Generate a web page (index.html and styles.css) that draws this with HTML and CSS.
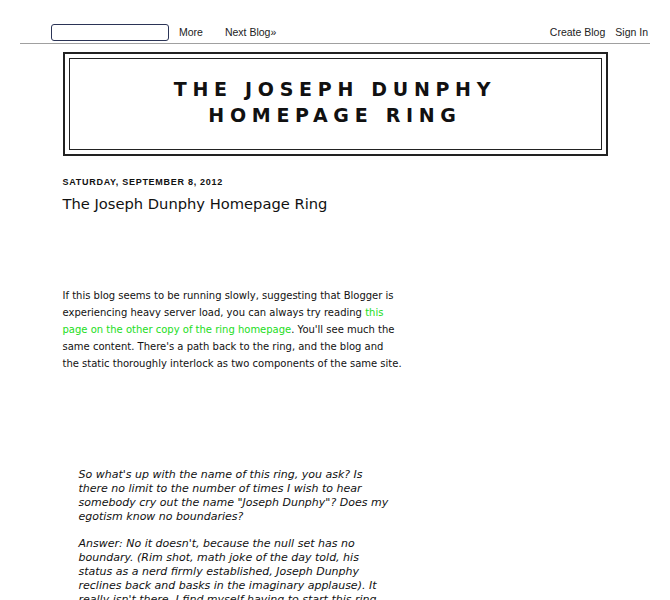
FILE: index.html
```html
<!DOCTYPE html>
<html lang="en">
<head>
    <meta charset="UTF-8">
    <meta name="viewport" content="width=device-width, initial-scale=1.0">
    <title>The Joseph Dunphy Homepage Ring</title>
    <link rel="stylesheet" href="styles.css">
</head>
<body>
    <div class="navbar">
        <div class="nav-left">
            <input type="text" class="search-box">
            <a href="#">More</a>
            <a href="#">Next Blog&raquo;</a>
        </div>
        <div class="nav-right">
            <a href="#">Create Blog</a>
            <a href="#">Sign In</a>
        </div>
    </div>

    <div class="outer-wrapper">
        <div class="header-wrapper">
            <div class="header">
                <h1>The Joseph Dunphy Homepage Ring</h1>
            </div>
        </div>

        <div class="main">
            <h2 class="date-header">Saturday, September 8, 2012</h2>
            <h3 class="post-title">The Joseph Dunphy Homepage Ring</h3>

            <div class="post-body">
                <p class="intro">If this blog seems to be running slowly, suggesting that Blogger is experiencing heavy server load, you can always try reading <a href="#">this page on the other copy of the ring homepage</a>. You'll see much the same content. There's a path back to the ring, and the blog and the&nbsp;static thoroughly interlock as two components of the same site.</p>

                <blockquote>
                    <p>So what's up with the name of this ring, you ask? Is there no limit to the number of times I wish to hear somebody cry out the name "Joseph Dunphy"? Does my egotism know no boundaries?</p>
                    <p>Answer: No it doesn't, because the null set has no boundary. (Rim shot, math joke of the day told, his status as a nerd firmly established, Joseph Dunphy reclines back and basks in the imaginary applause). It really isn't there. I find myself having to start this ring because nobody else would.</p>
                </blockquote>
            </div>
        </div>
    </div>
</body>
</html>
```

FILE: styles.css
```css
body {
    margin: 0;
    background-color: #fff;
    color: #111;
    font-family: "DejaVu Sans", sans-serif;
}
a {
    color: #22dd22;
    text-decoration: none;
}

/* blogger bar */
.navbar {
    display: flex;
    justify-content: space-between;
    align-items: center;
    margin: 0 20px;
    height: 44px;
    padding-top: 21px;
    box-sizing: border-box;
    border-bottom: 1px solid #a0a0a0;
    font-family: "Liberation Sans", Arial, sans-serif;
    font-size: 10.5px;
}
.navbar a {
    color: #222;
}
.nav-left {
    display: flex;
    align-items: center;
    padding-left: 31px;
    gap: 10px;
}
.nav-left a + a {
    margin-left: 12px;
}
.search-box {
    width: 118px;
    height: 17px;
    box-sizing: border-box;
    border: 1px solid #2b3456;
    border-radius: 3px;
    margin: 0;
}
.nav-right {
    display: flex;
    gap: 10px;
    padding-right: 2px;
}

/* header */
.outer-wrapper {
    width: 545px;
    margin: 8px auto 0;
}
.header-wrapper {
    border: 2px solid #222;
    padding: 4px;
}
.header {
    border: 1px solid #222;
    padding: 17px 0 21px;
    text-align: center;
}
.header h1 {
    margin: 0;
    font-size: 19px;
    line-height: 26px;
    font-weight: bold;
    text-transform: uppercase;
    letter-spacing: 0.3em;
    padding: 0 60px;
}

/* post */
.date-header {
    margin: 20px 0 0;
    font-family: "Liberation Sans", Arial, sans-serif;
    font-size: 9px;
    font-weight: bold;
    letter-spacing: 0.08em;
    text-transform: uppercase;
    line-height: 12px;
}
.post-title {
    margin: 6px 0 0;
    font-size: 14.7px;
    font-weight: normal;
    line-height: 20px;
}
.post-body {
    width: 342px;
    font-size: 10px;
    line-height: 17px;
}
.intro {
    margin: 73px 0 0;
}
blockquote {
    width: 312px;
    margin: 96px 0 0 16px;
    font-size: 11px;
    font-style: italic;
    line-height: 14px;
}
blockquote p {
    margin: 0 0 13px;
}
```
